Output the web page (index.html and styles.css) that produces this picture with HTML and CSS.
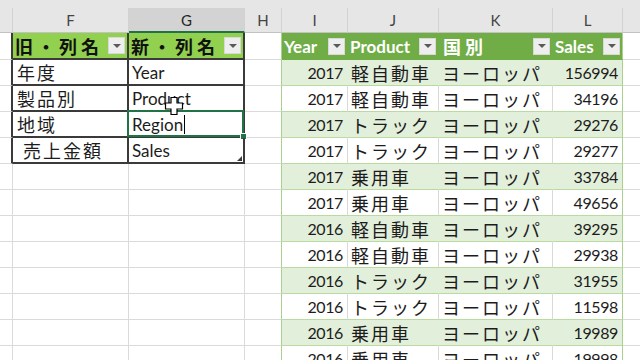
FILE: index.html
```html
<!DOCTYPE html>
<html lang="ja">
<head>
<meta charset="utf-8">
<title>Sheet</title>
<link rel="stylesheet" href="styles.css">
</head>
<body>
<div class="page">
  <div class="top"></div>
  <div class="sheet">
    <!-- column headers -->
    <div class="c ch"></div>
    <div class="c ch">F</div>
    <div class="c ch sel">G</div>
    <div class="c ch">H</div>
    <div class="c ch">I</div>
    <div class="c ch">J</div>
    <div class="c ch">K</div>
    <div class="c ch">L</div>
    <div class="c ch"></div>

    <!-- table headers -->
    <div class="c ledge"></div>
    <div class="c lh jp">旧・列名<span class="fb"></span></div>
    <div class="c lh jp">新・列名<span class="fb"></span></div>
    <div class="c redge"></div>
    <div class="c rh">Year<span class="fb"></span></div>
    <div class="c rh">Product<span class="fb"></span></div>
    <div class="c rh jp">国別<span class="fb"></span></div>
    <div class="c rh last">Sales<span class="fb"></span></div>
    <div class="c"></div>

    <!-- row 1 -->
    <div class="c ledge"></div>
    <div class="c lt jp">年度</div>
    <div class="c lt">Year</div>
    <div class="c redge"></div>
    <div class="c rb num">2017</div>
    <div class="c rb jp">軽自動車</div>
    <div class="c rb jp">ヨーロッパ</div>
    <div class="c rb num last">156994</div>
    <div class="c"></div>

    <!-- row 2 -->
    <div class="c ledge"></div>
    <div class="c lt jp">製品別</div>
    <div class="c lt">Product</div>
    <div class="c redge"></div>
    <div class="c rw num">2017</div>
    <div class="c rw jp">軽自動車</div>
    <div class="c rw jp">ヨーロッパ</div>
    <div class="c rw num last">34196</div>
    <div class="c"></div>

    <!-- row 3 -->
    <div class="c ledge"></div>
    <div class="c lt jp">地域</div>
    <div class="c lt active">Region<span class="caret"></span></div>
    <div class="c redge"></div>
    <div class="c rb num">2017</div>
    <div class="c rb jp">トラック</div>
    <div class="c rb jp">ヨーロッパ</div>
    <div class="c rb num last">29276</div>
    <div class="c"></div>

    <!-- row 4 -->
    <div class="c ledge"></div>
    <div class="c lt jp indent">売上金額</div>
    <div class="c lt resize">Sales</div>
    <div class="c redge"></div>
    <div class="c rw num">2017</div>
    <div class="c rw jp">トラック</div>
    <div class="c rw jp">ヨーロッパ</div>
    <div class="c rw num last">29277</div>
    <div class="c"></div>

    <!-- row 5 -->
    <div class="c"></div>
    <div class="c"></div>
    <div class="c"></div>
    <div class="c redge"></div>
    <div class="c rb num">2017</div>
    <div class="c rb jp">乗用車</div>
    <div class="c rb jp">ヨーロッパ</div>
    <div class="c rb num last">33784</div>
    <div class="c"></div>

    <!-- row 6 -->
    <div class="c"></div>
    <div class="c"></div>
    <div class="c"></div>
    <div class="c redge"></div>
    <div class="c rw num">2017</div>
    <div class="c rw jp">乗用車</div>
    <div class="c rw jp">ヨーロッパ</div>
    <div class="c rw num last">49656</div>
    <div class="c"></div>

    <!-- row 7 -->
    <div class="c"></div>
    <div class="c"></div>
    <div class="c"></div>
    <div class="c redge"></div>
    <div class="c rb num">2016</div>
    <div class="c rb jp">軽自動車</div>
    <div class="c rb jp">ヨーロッパ</div>
    <div class="c rb num last">39295</div>
    <div class="c"></div>

    <!-- row 8 -->
    <div class="c"></div>
    <div class="c"></div>
    <div class="c"></div>
    <div class="c redge"></div>
    <div class="c rw num">2016</div>
    <div class="c rw jp">軽自動車</div>
    <div class="c rw jp">ヨーロッパ</div>
    <div class="c rw num last">29938</div>
    <div class="c"></div>

    <!-- row 9 -->
    <div class="c"></div>
    <div class="c"></div>
    <div class="c"></div>
    <div class="c redge"></div>
    <div class="c rb num">2016</div>
    <div class="c rb jp">トラック</div>
    <div class="c rb jp">ヨーロッパ</div>
    <div class="c rb num last">31955</div>
    <div class="c"></div>

    <!-- row 10 -->
    <div class="c"></div>
    <div class="c"></div>
    <div class="c"></div>
    <div class="c redge"></div>
    <div class="c rw num">2016</div>
    <div class="c rw jp">トラック</div>
    <div class="c rw jp">ヨーロッパ</div>
    <div class="c rw num last">11598</div>
    <div class="c"></div>

    <!-- row 11 -->
    <div class="c"></div>
    <div class="c"></div>
    <div class="c"></div>
    <div class="c redge"></div>
    <div class="c rb num">2016</div>
    <div class="c rb jp">乗用車</div>
    <div class="c rb jp">ヨーロッパ</div>
    <div class="c rb num last">19989</div>
    <div class="c"></div>

    <!-- row 12 -->
    <div class="c"></div>
    <div class="c"></div>
    <div class="c"></div>
    <div class="c redge"></div>
    <div class="c rw num">2016</div>
    <div class="c rw jp">乗用車</div>
    <div class="c rw jp">ヨーロッパ</div>
    <div class="c rw num last">19998</div>
    <div class="c"></div>
  </div>

  <svg class="cursor" width="20" height="20" viewBox="0 0 20 20">
    <path d="M7 1.5h6v5.5h5.5v6H13v5.5H7V13H1.5V7H7z" fill="#fff" stroke="#000" stroke-width="1.2" stroke-linejoin="miter"/>
  </svg>
</div>
</body>
</html>
```

FILE: styles.css
```css
html, body {
  margin: 0;
  padding: 0;
  background: #ffffff;
}

body {
  width: 640px;
  height: 360px;
  overflow: hidden;
  font-family: Lato, "Noto Sans CJK JP", sans-serif;
}

.page {
  position: relative;
  width: 640px;
  height: 360px;
  overflow: hidden;
}

.top {
  height: 8px;
  background: #e6e6e6;
}

.sheet {
  display: grid;
  grid-template-columns: 13px 116px 116px 37px 66px 91px 114px 70px 18px;
  grid-template-rows: 25px 27px;
  grid-auto-rows: 26px;
}

.c {
  box-sizing: border-box;
  border-right: 1px solid #dadada;
  border-bottom: 1px solid #dadada;
  display: flex;
  align-items: center;
  white-space: nowrap;
  padding: 0 3px;
  font-size: 16px;
  line-height: 1;
  color: #1c1c1c;
  min-width: 0;
}

/* column header band */
.ch {
  background: #e6e6e6;
  border-right-color: #d2d2d2;
  border-bottom-color: #c2c2c2;
  justify-content: center;
  align-items: flex-end;
  padding-bottom: 4px;
  font-size: 15px;
  color: #444444;
}

.ch.sel {
  background: #d3d3d3;
  border-bottom: 2px solid #217346;
  padding-bottom: 3px;
  color: #262626;
}

.jp {
  font-family: "Noto Sans CJK JP", sans-serif;
  font-size: 18px;
  letter-spacing: 2px;
}

.num {
  justify-content: flex-end;
  letter-spacing: -0.4px;
  padding-right: 4px;
}

/* left (old/new name) table */
.ledge {
  border-right: 2px solid #3a3a3a;
}

.lh {
  background: #92d050;
  border-right: 2px solid #3a3a3a;
  border-bottom: 2px solid #3a3a3a;
  font-weight: 700;
  letter-spacing: 4px;
  color: #111111;
  padding-left: 2px;
  padding-right: 2px;
}

.lt {
  border-right: 2px solid #3a3a3a;
  border-bottom: 2px solid #3a3a3a;
  padding-left: 3px;
  font-size: 17px;
}

.lt.jp {
  padding-left: 4px;
  font-size: 18px;
}

.lt.indent {
  padding-left: 10px;
}

.active {
  position: relative;
}

.active::before {
  content: "";
  position: absolute;
  left: -2px;
  top: -2px;
  right: -1px;
  bottom: -1px;
  border: 2px solid #217346;
}

.active::after {
  content: "";
  position: absolute;
  right: -4px;
  bottom: -4px;
  width: 5px;
  height: 5px;
  background: #217346;
  border: 1px solid #ffffff;
}

.caret {
  display: inline-block;
  width: 1px;
  height: 19px;
  background: #000000;
  margin-left: 1px;
}

.resize {
  position: relative;
}

.resize::after {
  content: "";
  position: absolute;
  right: 1px;
  bottom: 1px;
  border-left: 5px solid transparent;
  border-bottom: 5px solid #3a3a3a;
}

/* right data table */
.redge {
  border-right-color: #a9d08e;
}

.rh {
  background: #70ad47;
  border-right-color: #70ad47;
  border-bottom-color: #70ad47;
  color: #ffffff;
  font-weight: 700;
  font-size: 17px;
  padding-left: 2px;
  padding-right: 2px;
}

.rh.jp {
  font-size: 18px;
  letter-spacing: 4px;
  padding-left: 4px;
}

.rb {
  background: #e2efda;
  border-right-color: #e2efda;
  border-bottom-color: #b9dba0;
}

.rw {
  background: #ffffff;
  border-right-color: #d9d9d9;
  border-bottom-color: #b9dba0;
}

.rb.jp, .rw.jp {
  padding-left: 3px;
}

.last {
  border-right-color: #a9d08e;
}

.rh.last {
  border-right-color: #a9d08e;
}

/* filter dropdown button */
.fb {
  margin-left: auto;
  flex: none;
  box-sizing: border-box;
  width: 17px;
  height: 17px;
  background: #eeeeee;
  border: 1px solid #d8d8d8;
  display: flex;
  align-items: center;
  justify-content: center;
  letter-spacing: 0;
}

.fb::after {
  content: "";
  width: 0;
  height: 0;
  border-left: 4px solid transparent;
  border-right: 4px solid transparent;
  border-top: 4px solid #5a5a5a;
}

.cursor {
  position: absolute;
  left: 164px;
  top: 96px;
}
```
